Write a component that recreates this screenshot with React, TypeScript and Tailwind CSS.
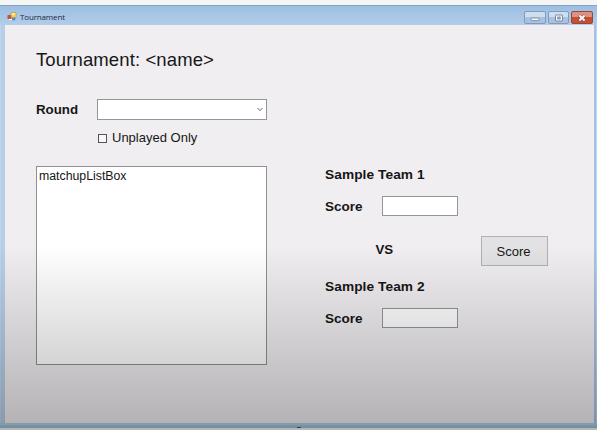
import React from "react";

function FormIcon() {
  return (
    <svg width="10" height="10" viewBox="0 0 10 10" className="shrink-0">
      <rect x="4" y="0.5" width="5.2" height="5.2" rx="0.8" fill="#f3cf4f" stroke="#b58f35" strokeWidth="0.5" />
      <rect x="5" y="1.2" width="2.6" height="2" fill="#fdf3b4" />
      <rect x="0.4" y="3" width="3.8" height="4" rx="0.8" fill="#c4553c" />
      <rect x="4.8" y="5.6" width="3.6" height="2.6" rx="0.5" fill="#6388c9" />
      <path d="M2 7.6h3" stroke="#fff" strokeWidth="1" />
    </svg>
  );
}

function CaptionButtons() {
  return (
    <div className="mt-[5px] flex h-[13px] gap-[2px]">
      <div className="flex w-[22px] items-center justify-center rounded-[2px] border border-[#8599b8] bg-linear-to-b from-[#cfdff2] from-50% to-[#a9c2e0] to-50%">
        <svg width="10" height="8" viewBox="0 0 10 8">
          <rect x="1" y="4" width="8" height="2.6" rx="0.6" fill="#f5f8fc" stroke="#66758f" strokeWidth="0.7" />
        </svg>
      </div>
      <div className="flex w-[21px] items-center justify-center rounded-[2px] border border-[#8599b8] bg-linear-to-b from-[#cfdff2] from-50% to-[#a9c2e0] to-50%">
        <svg width="10" height="8" viewBox="0 0 10 8">
          <rect x="1.5" y="1" width="7" height="6" rx="0.6" fill="#f5f8fc" stroke="#5f6e8a" strokeWidth="0.8" />
          <rect x="3.8" y="3" width="2.4" height="2" fill="#a9c2e0" stroke="#5f6e8a" strokeWidth="0.7" />
        </svg>
      </div>
      <div className="flex w-[22px] items-center justify-center rounded-[2px] border border-[#8f4a45] bg-linear-to-b from-[#de9180] from-50% to-[#c94d31] to-50%">
        <svg width="10" height="8" viewBox="0 0 10 8">
          <path d="M2.2 1.3 7.8 6.7M7.8 1.3 2.2 6.7" stroke="#7e4a48" strokeWidth="3" />
          <path d="M2.4 1.5 7.6 6.5M7.6 1.5 2.4 6.5" stroke="#fff" strokeWidth="1.9" />
        </svg>
      </div>
    </div>
  );
}

function ScoreRow({ className }: { className: string }) {
  return (
    <div className={`flex h-[20px] items-center ${className}`}>
      <span className="w-[57px] pt-[2px] text-[13.5px] leading-[20px] font-bold">Score</span>
      <div className="h-[20px] w-[76px] border border-[#96969a] bg-white" />
    </div>
  );
}

export default function App() {
  return (
    <div className="relative flex h-[430px] w-[597px] flex-col overflow-hidden bg-[#f4f5f5] pt-[5px] font-['Liberation_Sans',Arial,sans-serif] text-[#161616]">
      <div className="flex h-[423px] w-full flex-col border-t border-[#87a4bd] bg-linear-to-b from-[#9dbfe3] to-[#b4cde9] to-[20px]">
        <header className="flex h-[19px] shrink-0 justify-between pr-[4px] pl-[7px]">
          <div className="flex items-center gap-[3px] pt-[3px]">
            <FormIcon />
            <span className="font-['Open_Sans','Noto_Sans',sans-serif] text-[8px] leading-[12px] font-medium tracking-[-0.15px] text-[#1d2b42]">Tournament</span>
          </div>
          <CaptionButtons />
        </header>

        <div className="flex min-h-0 flex-1 border-x border-[#c0d5e9]">
          <div className="w-[4px] shrink-0 bg-[#b7cee9]" />
          <main className="flex h-[398px] flex-1 bg-[#f0eef1] pl-[31px]">
            <section className="w-[289px] shrink-0">
              <h1 className="mt-[24px] text-[18.5px] leading-[22px] tracking-[0.12px] whitespace-nowrap">Tournament: &lt;name&gt;</h1>
              <div className="mt-[28px] flex h-[21px] items-center">
                <span className="w-[61px] text-[13.3px] leading-[20px] font-bold">Round</span>
                <div className="flex h-[21px] w-[170px] items-center justify-end border border-[#96969a] bg-white pr-[3px]">
                  <svg width="6" height="5" viewBox="0 0 6 5" fill="none">
                    <path d="M0.5 1 3 3.7 5.5 1" stroke="#666" strokeWidth="1" />
                  </svg>
                </div>
              </div>
              <div className="mt-[8px] flex h-[20px] items-center gap-[5px] pl-[62px]">
                <div className="size-[9px] border border-[#555] bg-[#f8f8f9]" />
                <span className="text-[13px] leading-[20px]">Unplayed Only</span>
              </div>
              <div className="mt-[18px] h-[199px] w-[231px] border border-[#909093] bg-white px-[2px] text-[12.3px] leading-[18px]">
                matchupListBox
              </div>
            </section>

            <section className="w-[156px] shrink-0 pt-[139px]">
              <h2 className="pt-px text-[13.7px] leading-[20px] font-bold tracking-[0.08px]">Sample Team 1</h2>
              <ScoreRow className="mt-[11px]" />
              <div className="mt-[24px] pl-[50.5px] text-[13.3px] leading-[20px] font-bold">VS</div>
              <h2 className="mt-[17px] text-[13.7px] leading-[20px] font-bold tracking-[0.08px]">Sample Team 2</h2>
              <ScoreRow className="mt-[11px]" />
            </section>

            <button className="mt-[211px] h-[30px] w-[67px] border border-[#b1b1b4] bg-[#e2e2e4] pt-px pr-[2px] text-[13px] leading-[20px]">Score</button>
          </main>
          <div className="w-[2px] shrink-0 bg-[#a4c3e4]" />
        </div>
        <div className="flex h-[5px] shrink-0 items-end justify-center bg-linear-to-b from-[#b6cbe2] from-40% to-[#8fc5db] to-60%">
          <div className="h-px w-[4px] bg-[#45545c]" />
        </div>
      </div>
      <div className="pointer-events-none absolute inset-x-0 top-[245px] bottom-0 bg-linear-to-b from-black/0 to-black/26" />
    </div>
  );
}
